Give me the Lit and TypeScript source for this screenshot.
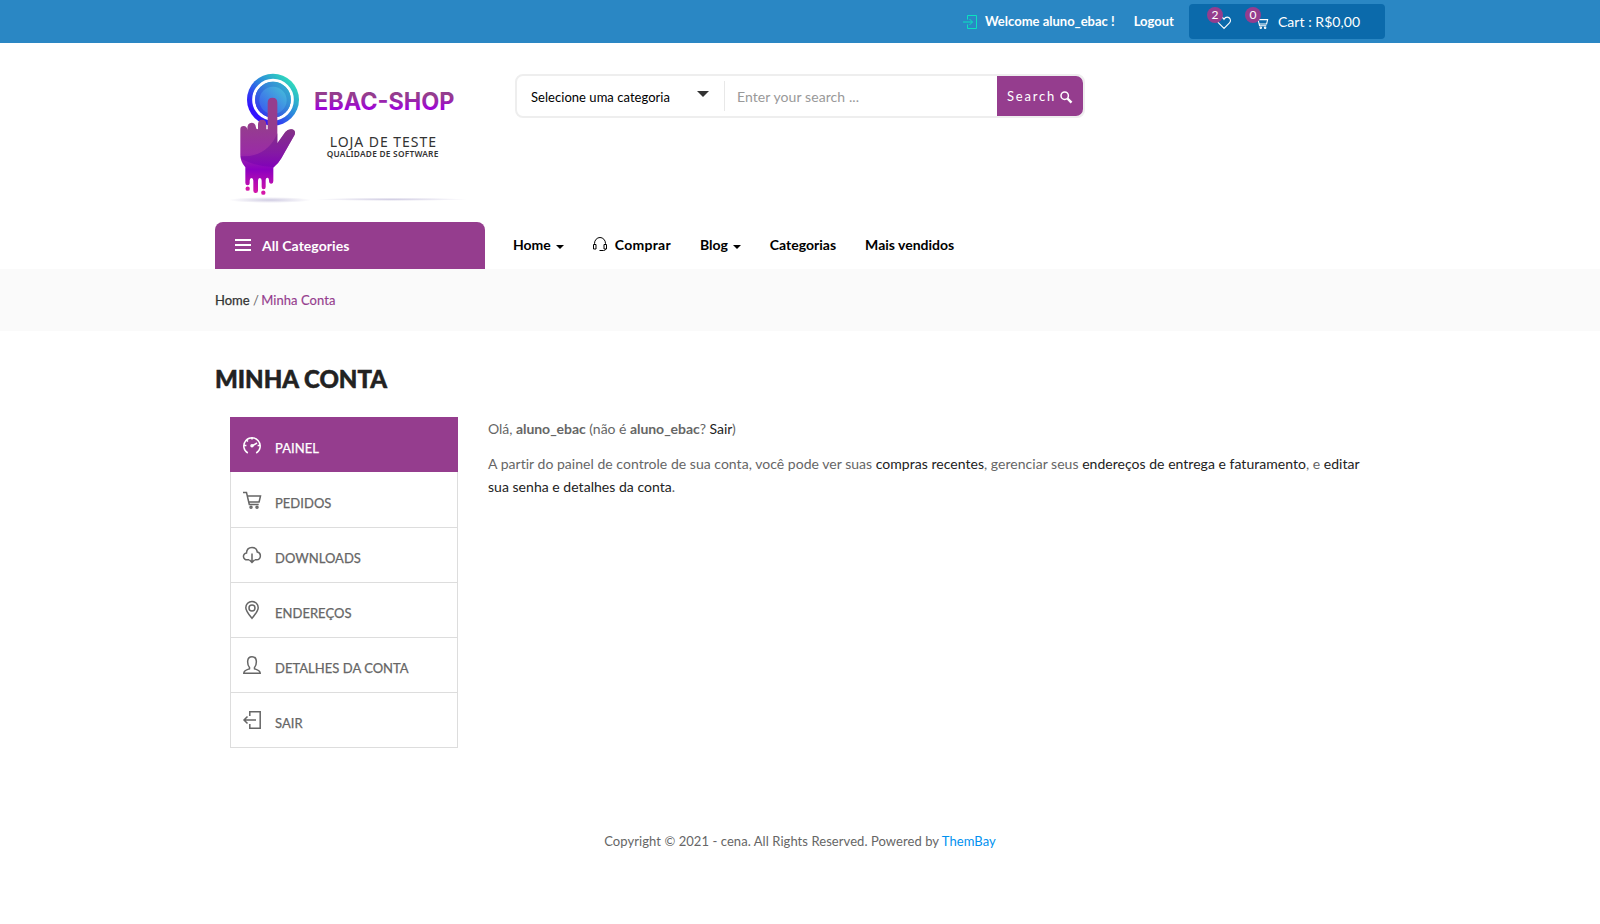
import { LitElement, html, svg, css } from "lit";
import { customElement } from "lit/decorators.js";

const icon = (name: string) => {
  const shapes: Record<string, unknown> = {
    login: svg`<path d="M4.500 4.500v-4h9v13h-9v-4M0 7h9.500M6.500 4l3 3-3 3"/>`,
    heart: svg`<path d="M6.500 11.500 1.200 6.200C-.5 3.800 1 1 3.500 1 5 1 6 2 6.500 3 7 2 8 1 9.500 1 12 1 13.500 3.800 11.800 6.200Z"/>`,
    cart: svg`<path d="M0 1.500h3.500l2.800 12h9.400M4.300 5h13.200l-1.400 6H5.800"/><circle cx="8" cy="16.300" r="1"/><circle cx="14" cy="16.300" r="1"/>`,
    gauge: svg`<path d="M4.800 17A8.200 8.200 0 1 1 13.200 17M9 1v2.600M3.400 4l1.500 1.500M1 9.500h2.400M14.600 9.500H17M9 10l5-3"/><circle cx="9" cy="9.800" r="1"/>`,
    cloud: svg`<path d="M6 13.800H4.300A3.400 3.400 0 0 1 3.500 7C3.700 3.500 6 1.500 9 1.500s5 1.800 5.300 4.600A3.900 3.900 0 0 1 13.700 13.800H12M9 7.500v9M6.300 13.800 9 16.500l2.700-2.700"/>`,
    pin: svg`<path d="M9 17.300C5.500 13 2.800 10 2.800 6.700a6.200 6.200 0 0 1 12.400 0C15.200 10 12.500 13 9 17.300Z"/><circle cx="9" cy="6.900" r="3"/>`,
    user: svg`<path d="M6.500 11.500C5 10 4.500 8 4.700 5 4.900 2 6.500.8 9 .8s4.100 1.200 4.300 4.200c.2 3-.3 5-1.800 6.500v1.300c3 1 5.700 1.500 5.700 4.400H.8c0-2.900 2.700-3.400 5.700-4.400Z"/>`,
    exit: svg`<path d="M6.800 5V.8h10.400v16.400H6.800V13M13 9H1M4.500 5.500 1 9l3.500 3.500"/>`,
    headset: svg`<path d="M1.500 7.500V6.500a5.500 6 0 0 1 11 0v1M.5 7.500h2.500v4.500H.5ZM11 7.500h2.500v4.500H11ZM12.500 12v.500c0 .7-1 1-2 1H6.500"/>`,
    search: svg`<circle cx="4.700" cy="4.700" r="3.700"/><path d="m7.500 7.500 4 4.200" stroke-width="2.400"/>`,
  };
  return shapes[name];
};

@customElement("app-root")
export class AppRoot extends LitElement {
  static styles = css`
    :host { display: block; font: 14px/23px Lato, sans-serif; color: #666; background: #fff; height: 924px; overflow: hidden; }
    * { box-sizing: border-box; }
    svg { display: block; flex: none; overflow: visible; }
    .line { fill: none; stroke: currentColor; stroke-width: 1.5; }
    .thin { stroke-width: 1; }
    .top { height: 43px; background: #2a87c4; color: #fff; display: flex; padding-left: 963px; }
    .login { color: #0be3c0; margin: 15px 8px 0 0; }
    .top b { margin: 10px 19px 0 0; white-space: nowrap; font-size: 13px; }
    .top b.out { margin-right: 15px; }
    .cartbox { width: 196px; height: 35px; margin-top: 4px; background: #0b6aab; border-radius: 4px; display: flex; padding-left: 28px; }
    .ico { position: relative; width: 14px; margin: 12px 24px 0 0; }
    .ico.c { margin-right: 9px; }
    .badge { position: absolute; left: -10px; top: -9px; width: 16px; height: 16px; border-radius: 50%; background: #953d8e; font-size: 12px; line-height: 16px; text-align: center; }
    .total { margin-top: 6px; white-space: nowrap; letter-spacing: .05px; }
    .head { display: flex; height: 179px; padding: 17px 0 0 210px; }
    .search { margin: 14px 0 0 25px; width: 570px; height: 44px; border: 2px solid #eee; border-radius: 8px; display: flex; background: #fff; }
    .sel { width: 207px; padding: 10px 15px 0 14px; display: flex; justify-content: space-between; color: #000; line-height: 22px; font-size: 13px; letter-spacing: .04px; }
    .down { width: 0; height: 0; border: 6px solid transparent; border-top: 6px solid #333; border-bottom: 0; margin-top: 5px; }
    .field { border-left: 1px solid #e8e8e8; height: 30px; margin-top: 5px; flex: 1; padding: 5px 12px; line-height: 22px; color: #999; letter-spacing: .08px; }
    .go { width: 86px; background: #953d8e; border-radius: 0 7px 7px 0; color: #fff; display: flex; padding: 9px 0 0 10px; line-height: 22px; letter-spacing: 1.8px; font-size: 13px; }
    .go svg { margin: 6px 0 0 4px; }
    .nav { height: 47px; padding-left: 215px; display: flex; color: #000; font-weight: 700; }
    .all { width: 270px; background: #953d8e; border-radius: 8px 8px 0 0; color: #fff; display: flex; padding: 12px 0 0 20px; margin-right: 28px; letter-spacing: .05px; }
    .bars { width: 16px; height: 12px; margin: 5px 11px 0 0; border-top: 2px solid; border-bottom: 2px solid; display: flex; align-items: center; }
    .bars i { height: 2px; flex: 1; background: #fff; }
    .link { display: flex; margin: 11px 29px 0 0; white-space: nowrap; }
    .wide { letter-spacing: .25px; }
    .tri { border: 4px solid transparent; border-top-color: #000; border-bottom: 0; height: 0; margin: 12px 0 0 5px; }
    .link svg { margin: 4px 8px 0 0; }
    .crumb { height: 62px; background: #fafafa; padding: 20px 0 0 215px; font-size: 13px; }
    .crumb b { color: #333; font-weight: 400; -webkit-text-stroke: .25px; }
    .crumb span { color: #953d8e; margin-left: -1px; letter-spacing: .06px; -webkit-text-stroke: .15px; }
    h1 { margin: 30px 0 0 215px; height: 56px; font: 900 24px/36px Lato, sans-serif; color: #222; -webkit-text-stroke: .5px; }
    .body { display: flex; padding-left: 230px; height: 331px; }
    .menu { width: 228px; font-size: 13px; }
    .item { height: 55px; border: 1px solid #ddd; border-top: 0; display: flex; padding: 18px 0 0 12px; line-height: 24px; -webkit-text-stroke: .25px; }
    .item:nth-child(-n+2) { padding-top: 19px; }
    .item:nth-child(2) { height: 56px; }
    .item:first-child { background: #953d8e; border-color: #953d8e; color: #fff; }
    .item span { margin-left: 14px; letter-spacing: .03px; }
    .text { margin-left: 30px; width: 882px; }
    .text p { margin: 0 0 12px; letter-spacing: -.04px; }
    .text p + p { letter-spacing: .03px; }
    .text a { color: #222; }
    .copy { margin-top: 82px; text-align: center; font-size: 13px; letter-spacing: .065px; }
    .copy a { color: #0091f0; }
  `;

  private pic(name: string, w: number, h: number, box: string, cls = "line") {
    return html`<svg class=${cls} width=${w} height=${h} viewBox=${box}>${icon(name)}</svg>`;
  }

  private logo() {
    return html`<svg width="280" height="150" viewBox="0 0 840 450">
      <defs>
        <linearGradient id="ring" x1="0" y1="1" x2="1" y2="0"><stop offset=".2" stop-color="#3210ff"/><stop offset=".55" stop-color="#2c88dc"/><stop offset=".85" stop-color="#2fd8bd"/></linearGradient>
        <linearGradient id="disc" x1="0" y1="1" x2="1" y2="0"><stop offset=".05" stop-color="#3130ee"/><stop offset=".6" stop-color="#3587d8"/><stop offset="1" stop-color="#32b9cb"/></linearGradient>
        <linearGradient id="glow" x1="0" y1="1" x2="1" y2="0"><stop offset="0" stop-color="#3b55f0"/><stop offset="1" stop-color="#45c3d8"/></linearGradient>
        <linearGradient id="skin" gradientUnits="userSpaceOnUse" x1="0" y1="113" x2="0" y2="400"><stop offset=".3" stop-color="#953d8e"/><stop offset=".58" stop-color="#9a2ba6"/><stop offset=".75" stop-color="#8b00c0"/><stop offset="1" stop-color="#d516a8"/></linearGradient>
        <linearGradient id="dark" gradientUnits="userSpaceOnUse" x1="0" y1="200" x2="0" y2="325"><stop offset="0" stop-color="#7d3280"/><stop offset="1" stop-color="#7d00b8"/></linearGradient>
        <linearGradient id="word" gradientUnits="userSpaceOnUse" x1="0" y1="97" x2="0" y2="149"><stop offset=".2" stop-color="#953d8e"/><stop offset="1" stop-color="#a000dc"/></linearGradient>
        <radialGradient id="shade"><stop offset="0" stop-color="#cfcbe2"/><stop offset="1" stop-color="#fff"/></radialGradient>
      </defs>
      <ellipse cx="180" cy="420" rx="124" ry="9" fill="url(#shade)"/>
      <ellipse cx="544" cy="418" rx="228" ry="5" fill="url(#shade)"/>
      <circle cx="189" cy="119" r="78" fill="url(#ring)"/>
      <circle cx="189" cy="119" r="58" fill="none" stroke="#fff" stroke-width="9"/>
      <circle cx="189" cy="119" r="53.500" fill="url(#disc)"/>
      <circle cx="189" cy="121" r="41" fill="url(#glow)"/>
      <path fill="url(#skin)" d="M91 208Q91 198 101 198Q111 198 112 210Q111 188 125 188Q137 188 139 206L144 208V192Q145 179 156 179Q168 179 169 192V208H173V128Q173 113 187.500 113Q202 113 202 128V250L226 216Q234 206 246 208Q258 211 254 224L248 235L214 295Q206 310 190 323V363Q190 371 184 371Q177 371 177 362Q177 353 172 353Q167 353 167 362V381Q167 388 161 388Q155 388 155 381V362Q155 354 149.500 354Q144 354 144 362V392Q144 399 137 399Q130 399 130 392V362Q130 354 124.500 354Q119 354 119 362V370Q119 376 113 376Q106 376 106 369V322Q91 305 91 285Z"/>
      <path fill="url(#dark)" opacity=".75" d="M202 250L226 216Q234 206 246 208Q258 211 254 224L248 235L214 295Q206 310 190 321Q145 322 94 297L92 289Q172 292 202 220Z"/>
      <circle cx="113" cy="386" r="6.500" fill="#d516a8"/><circle cx="160" cy="398" r="6.500" fill="#d516a8"/>
      <text x="312" y="149" textLength="421" lengthAdjust="spacingAndGlyphs" font-family="Inter, sans-serif" font-weight="700" font-size="71" fill="url(#word)">EBAC-SHOP</text>
      <text x="359" y="261" textLength="319" font-family="Noto Sans, sans-serif" font-size="42" fill="#333">LOJA DE TESTE</text>
      <text x="350" y="291" textLength="335" font-family="Noto Sans, sans-serif" font-weight="600" font-size="25" fill="#333">QUALIDADE DE SOFTWARE</text>
    </svg>`;
  }

  render() {
    const items = [["gauge", "PAINEL"], ["cart", "PEDIDOS"], ["cloud", "DOWNLOADS"], ["pin", "ENDEREÇOS"], ["user", "DETALHES DA CONTA"], ["exit", "SAIR"]];
    return html`
      <div class="top">
        <div class="login">${this.pic("login", 14, 14, "0 0 14 14", "line thin")}</div>
        <b>Welcome aluno_ebac !</b><b class="out">Logout</b>
        <div class="cartbox">
          <div class="ico">${this.pic("heart", 14, 13, "0 0 13 12", "line thin")}<span class="badge">2</span></div>
          <div class="ico c">${this.pic("cart", 13, 13, "0 0 18 18")}<span class="badge">0</span></div>
          <span class="total">Cart : R$0,00</span>
        </div>
      </div>
      <div class="head">
        ${this.logo()}
        <div class="search">
          <div class="sel"><span>Selecione uma categoria</span><i class="down"></i></div>
          <div class="field">Enter your search ...</div>
          <div class="go"><span>Search</span>${this.pic("search", 12, 12, "0 0 12 12")}</div>
        </div>
      </div>
      <div class="nav">
        <div class="all"><div class="bars"><i></i></div><span>All Categories</span></div>
        <div class="link"><span>Home</span><i class="tri"></i></div>
        <div class="link">${this.pic("headset", 14, 14, "0 0 14 14", "line thin")}<span class="wide">Comprar</span></div>
        <div class="link"><span>Blog</span><i class="tri"></i></div>
        <div class="link"><span>Categorias</span></div>
        <div class="link"><span>Mais vendidos</span></div>
      </div>
      <div class="crumb"><b>Home</b> / <span>Minha Conta</span></div>
      <h1>MINHA CONTA</h1>
      <div class="body">
        <div class="menu">${items.map(([i, t]) => html`<div class="item">${this.pic(i, 18, 18, "0 0 18 18")}<span>${t}</span></div>`)}</div>
        <div class="text">
          <p>Olá, <b>aluno_ebac</b> (não é <b>aluno_ebac</b>? <a>Sair</a>)</p>
          <p>A partir do painel de controle de sua conta, você pode ver suas <a>compras recentes</a>, gerenciar seus <a>endereços de entrega e faturamento</a>, e <a>editar sua senha e detalhes da conta</a>.</p>
        </div>
      </div>
      <div class="copy">Copyright © 2021 - cena. All Rights Reserved. Powered by <a>ThemBay</a></div>
    `;
  }
}
